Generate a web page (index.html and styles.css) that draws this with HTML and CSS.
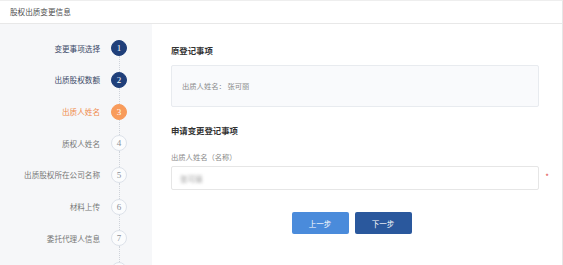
FILE: index.html
```html
<!DOCTYPE html>
<html lang="zh">
<head>
<meta charset="utf-8">
<title>股权出质变更信息</title>
<link rel="stylesheet" href="styles.css">
</head>
<body>
<div class="page">
  <header class="topbar">股权出质变更信息</header>
  <div class="main">
    <nav class="steps">
      <div class="step done"><span class="label">变更事项选择</span><span class="dot">1</span></div>
      <div class="step done"><span class="label">出质股权数额</span><span class="dot">2</span></div>
      <div class="step current"><span class="label">出质人姓名</span><span class="dot">3</span></div>
      <div class="step"><span class="label">质权人姓名</span><span class="dot">4</span></div>
      <div class="step"><span class="label">出质股权所在公司名称</span><span class="dot">5</span></div>
      <div class="step"><span class="label">材料上传</span><span class="dot">6</span></div>
      <div class="step"><span class="label">委托代理人信息</span><span class="dot">7</span></div>
      <div class="step last"><span class="label"></span><span class="dot"></span></div>
    </nav>
    <section class="content">
      <h2 class="section-title">原登记事项</h2>
      <div class="orig-box">出质人姓名：&nbsp;张可丽</div>
      <h2 class="section-title second">申请变更登记事项</h2>
      <div class="field-label">出质人姓名（名称）</div>
      <div class="field-row">
        <div class="input"><span class="blurred">张可丽</span></div>
        <span class="req">*</span>
      </div>
      <div class="actions">
        <button class="btn prev">上一步</button>
        <button class="btn next">下一步</button>
      </div>
    </section>
  </div>
</div>
</body>
</html>
```
FILE: styles.css
```css
* { box-sizing: border-box; }
html, body { margin: 0; padding: 0; background: #fff; }
body {
  font-family: "Noto Sans CJK SC", "Noto Sans", sans-serif;
  color: #333;
}
.page {
  width: 563px;
  height: 265px;
  overflow: hidden;
  border-top: 1px solid #eeeeee;
  border-right: 1px solid #e6e6e6;
  display: flex;
  flex-direction: column;
}
.topbar {
  height: 23px;
  flex: none;
  border-bottom: 1px solid #e8e8e8;
  padding-left: 10px;
  font-size: 7.6px;
  line-height: 21px;
  color: #4d4d4d;
}
.main {
  flex: 1;
  display: flex;
  min-height: 0;
}
.steps {
  width: 152px;
  flex: none;
  background: #f6f7f9;
  padding-top: 8.5px;
  padding-right: 25px;
}
.step {
  position: relative;
  height: 31.67px;
  display: flex;
  align-items: center;
  justify-content: flex-end;
  gap: 11px;
}
.step::after {
  content: "";
  position: absolute;
  right: 7.5px;
  top: calc(50% + 8px);
  height: calc(100% - 16px);
  border-left: 1px dotted #cfd3da;
}
.step.last::after { display: none; }
.label {
  font-size: 7.6px;
  color: #777;
  white-space: nowrap;
}
.dot {
  width: 16px;
  height: 16px;
  border-radius: 50%;
  border: 1px solid #dde2ea;
  background: #fbfcfd;
  color: #8a8f98;
  font-family: "Liberation Serif", serif;
  font-size: 9px;
  display: flex;
  align-items: center;
  justify-content: center;
  flex: none;
}
.step.done .label { color: #3c4a68; }
.step.done .dot { background: #1f3f7a; border-color: #1f3f7a; color: #fff; }
.step.current .label { color: #f08a4c; }
.step.current .dot { background: #f89b5b; border-color: #f89b5b; color: #fff; }

.content {
  flex: 1;
  padding: 20px 23px 0 19px;
}
.section-title {
  margin: 0;
  font-size: 8.4px;
  line-height: 12px;
  font-weight: bold;
  color: #333;
}
.orig-box {
  margin-top: 9px;
  height: 42px;
  background: #f9fafc;
  border: 1px solid #e8ebef;
  border-radius: 2px;
  padding-left: 10px;
  display: flex;
  align-items: center;
  font-size: 7.3px;
  color: #8a8a8a;
}
.section-title.second { margin-top: 17px; }
.field-label {
  margin-top: 16px;
  font-size: 7.3px;
  line-height: 10px;
  color: #8a8a8a;
}
.field-row {
  position: relative;
  margin-top: 4px;
}
.input {
  height: 24px;
  border: 1px solid #e6e6e6;
  border-radius: 2px;
  padding-left: 8px;
  display: flex;
  align-items: center;
}
.blurred {
  font-size: 7.5px;
  color: #999;
  filter: blur(1.4px);
}
.req {
  position: absolute;
  right: -10px;
  top: 6px;
  color: #e04b4b;
  font-size: 8px;
  line-height: 10px;
}
.actions {
  margin-top: 22px;
  display: flex;
  justify-content: center;
  gap: 6px;
  padding-right: 7px;
}
.btn {
  width: 57px;
  height: 22px;
  border: none;
  border-radius: 2px;
  color: #fff;
  font-family: "Noto Sans CJK SC", sans-serif;
  font-size: 7.5px;
  padding: 0;
}
.btn.prev { background: #4a8bdb; }
.btn.next { background: #2a589d; }
```
